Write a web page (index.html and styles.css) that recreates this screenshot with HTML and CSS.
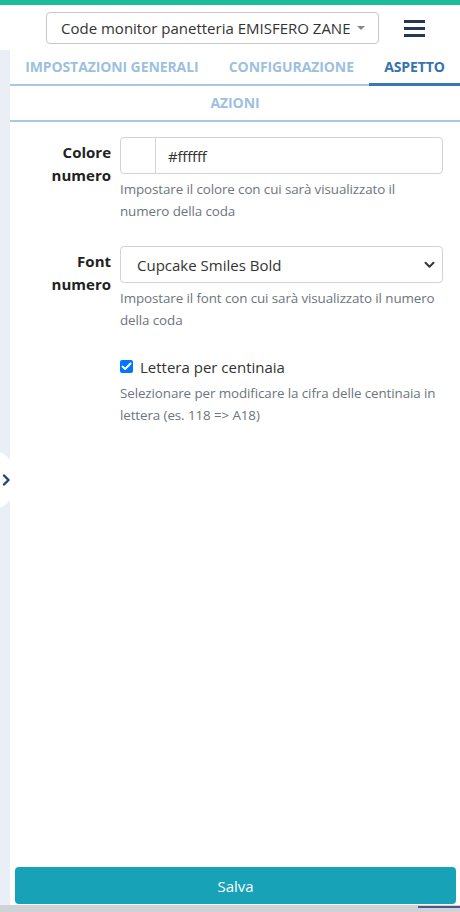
FILE: index.html
```html
<!DOCTYPE html>
<html lang="it">
<head>
<meta charset="utf-8">
<title>Code monitor</title>
<link rel="stylesheet" href="styles.css">
</head>
<body>
<div class="topbar"></div>
<header class="header">
  <div class="site-select">
    <span>Code monitor panetteria EMISFERO ZANE</span>
    <span class="caret"></span>
  </div>
  <button class="burger" aria-label="menu"><span></span><span></span><span></span></button>
</header>
<div class="main">
  <aside class="strip">
    <div class="side-toggle">
      <svg width="9" height="12" viewBox="0 0 9 12"><path d="M2 1.5 L6.5 6 L2 10.5" fill="none" stroke="#2b4170" stroke-width="2.4" stroke-linecap="round" stroke-linejoin="round"/></svg>
    </div>
  </aside>
  <section class="panel">
    <nav class="tabs">
      <a class="tab">IMPOSTAZIONI GENERALI</a>
      <a class="tab">CONFIGURAZIONE</a>
      <a class="tab active">ASPETTO</a>
      <a class="tab">AZIONI</a>
    </nav>
    <form class="form">
      <div class="row">
        <label class="label">Colore<br>numero</label>
        <div class="field">
          <div class="color-input">
            <span class="swatch"></span>
            <span class="value">#ffffff</span>
          </div>
          <p class="help">Impostare il colore con cui sarà visualizzato il numero della coda</p>
        </div>
      </div>
      <div class="row">
        <label class="label">Font<br>numero</label>
        <div class="field">
          <div class="select">
            <span>Cupcake Smiles Bold</span>
            <svg width="11" height="8" viewBox="0 0 11 8"><path d="M1.5 1.8 L5.5 5.8 L9.5 1.8" fill="none" stroke="#343a40" stroke-width="2" stroke-linecap="round" stroke-linejoin="round"/></svg>
          </div>
          <p class="help">Impostare il font con cui sarà visualizzato il numero della coda</p>
        </div>
      </div>
      <div class="row">
        <div class="label"></div>
        <div class="field">
          <div class="check">
            <span class="box"><svg width="11" height="9" viewBox="0 0 11 9"><path d="M1.5 4.5 L4.2 7 L9.5 1.5" fill="none" stroke="#fff" stroke-width="2" stroke-linecap="round" stroke-linejoin="round"/></svg></span>
            <span class="check-label">Lettera per centinaia</span>
          </div>
          <p class="help">Selezionare per modificare la cifra delle centinaia in lettera (es. 118 =&gt; A18)</p>
        </div>
      </div>
    </form>
    <div class="footer">
      <button class="save" type="button">Salva</button>
    </div>
  </section>
</div>
<div class="hscroll"><span class="thumb"></span></div>
</body>
</html>
```

FILE: styles.css
```css
* { box-sizing: border-box; }
html, body { margin: 0; padding: 0; }
body {
  width: 460px;
  height: 912px;
  overflow: hidden;
  font-family: "Open Sans", "Noto Sans", sans-serif;
  color: #212529;
  background: #fff;
  display: flex;
  flex-direction: column;
}
.topbar { height: 5px; background: #1abc9c; flex: none; }
.header {
  height: 45px;
  flex: none;
  display: flex;
  align-items: flex-start;
  padding: 7px 0 0 46px;
}
.site-select {
  width: 333px;
  height: 32px;
  border: 1px solid #c8c8c8;
  border-radius: 4px;
  display: flex;
  align-items: center;
  padding: 0 0 0 14px;
  font-size: 15px;
  color: #333;
  white-space: nowrap;
}
.caret {
  margin-left: 6px;
  width: 0; height: 0;
  border-left: 4px solid transparent;
  border-right: 4px solid transparent;
  border-top: 4px solid #888;
}
.burger {
  margin: 8px 0 0 25px;
  width: 21px;
  padding: 0;
  border: 0;
  background: none;
  display: flex;
  flex-direction: column;
  gap: 4px;
}
.burger span { display: block; height: 3px; background: #24365a; }
.main { flex: 1; display: flex; min-height: 0; }
.strip { width: 10px; flex: none; background: #e9eef7; position: relative; }
.side-toggle {
  position: absolute;
  left: -20px;
  top: 402px;
  width: 32px;
  height: 56px;
  background: #fff;
  border-radius: 16px;
  display: flex;
  align-items: center;
  justify-content: flex-end;
  padding-right: 1px;
}
.panel { flex: 1; display: flex; flex-direction: column; }
.tabs { display: flex; flex-wrap: wrap; }
.tab {
  flex: 1 1 auto;
  text-align: center;
  height: 36px;
  line-height: 34px;
  padding: 0 15px;
  font-size: 14px;
  font-weight: 700;
  color: #9dbfe0;
  border-bottom: 2px solid #a9c6e3;
  letter-spacing: -0.1px;
}
.tab.active {
  color: #3572b0;
  border-bottom: 3px solid #3a77b5;
  line-height: 33px;
}
.form { padding: 15px 17px 0 0; }
.row { display: flex; margin-bottom: 24px; }
.label {
  width: 110px;
  flex: none;
  padding: 4px 9px 0 0;
  text-align: right;
  font-size: 15px;
  font-weight: 700;
  line-height: 23px;
  color: #222;
}
.field { flex: 1; }
.color-input, .select {
  height: 37px;
  border: 1px solid #ced4da;
  border-radius: 4px;
  display: flex;
  align-items: center;
  font-size: 15px;
  color: #333;
}
.swatch { width: 35px; height: 100%; border-right: 1px solid #ced4da; }
.value { padding-left: 12px; letter-spacing: -0.2px; }
.select { justify-content: space-between; padding: 0 7px 0 16px; }
.help {
  margin: 4px 0 0;
  font-size: 13.4px;
  line-height: 22px;
  letter-spacing: -0.1px;
  color: #6c757d;
}
.check { display: flex; align-items: center; height: 23px; font-size: 15px; color: #333; }
.box {
  width: 13px; height: 13px;
  background: #0075ff;
  border-radius: 2px;
  display: flex; align-items: center; justify-content: center;
  margin-right: 7px;
}
.footer { margin-top: auto; padding: 0 4px 1px 5px; }
.save {
  width: 100%;
  height: 37px;
  border: 0;
  border-radius: 4px;
  background: #17a2b8;
  color: #fff;
  font-family: "Open Sans", "Noto Sans", sans-serif;
  font-size: 15px;
}
.hscroll { height: 7px; flex: none; background: #cfd2d7; display: flex; justify-content: flex-end; }
.thumb { width: 42px; height: 2px; margin-top: 1px; background: #4b5785; }
```
